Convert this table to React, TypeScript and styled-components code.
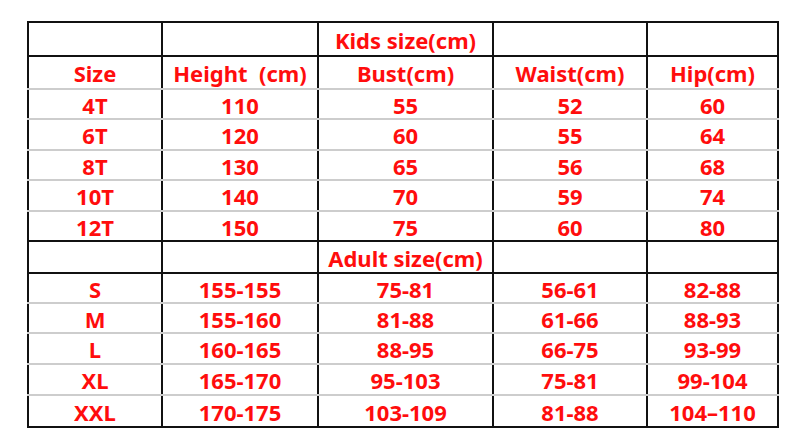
import React from "react";
import styled, { createGlobalStyle } from "styled-components";

const GlobalStyle = createGlobalStyle`
  html, body {
    margin: 0;
    padding: 0;
    background: #ffffff;
  }
`;

const Page = styled.div`
  width: 799px;
  height: 447px;
  padding: 21px 0 0 27px;
  box-sizing: border-box;
  background: #ffffff;
`;

const Table = styled.table`
  border-collapse: collapse;
  table-layout: fixed;
  width: 750px;
  border: 2px solid #111111;
  font-family: "Noto Sans", "Open Sans", "Noto Sans CJK SC", sans-serif;
  font-weight: 700;
  font-size: 22px;
  color: #ff0d0d;
`;

const Row = styled.tr<{ $h: number }>`
  height: ${({ $h }) => $h}px;
`;

const Cell = styled.td<{ $line: "black" | "gray" }>`
  padding: 1px 0 0;
  text-align: center;
  vertical-align: middle;
  line-height: 1;
  white-space: pre;
  border-left: 2px solid #111111;
  border-right: 2px solid #111111;
  border-bottom: 2px solid
    ${({ $line }) => ($line === "black" ? "#111111" : "#cdcdcd")};
`;

type Line = "black" | "gray";

const widths = [134, 156, 175, 154, 131];

const kids = [
  ["4T", "110", "55", "52", "60"],
  ["6T", "120", "60", "55", "64"],
  ["8T", "130", "65", "56", "68"],
  ["10T", "140", "70", "59", "74"],
  ["12T", "150", "75", "60", "80"],
];

const adults = [
  ["S", "155-155", "75-81", "56-61", "82-88"],
  ["M", "155-160", "81-88", "61-66", "88-93"],
  ["L", "160-165", "88-95", "66-75", "93-99"],
  ["XL", "165-170", "95-103", "75-81", "99-104"],
  ["XXL", "170-175", "103-109", "81-88", "104\u2013110"],
];

const kidHeights = [30, 31, 30, 31, 30];
const adultHeights = [30, 30, 31, 31, 32];

const DataRow = ({ cells, h, line }: { cells: string[]; h: number; line: Line }) => (
  <Row $h={h}>
    {cells.map((c, i) => (
      <Cell key={i} $line={line}>
        {c}
      </Cell>
    ))}
  </Row>
);

const SectionRow = ({ title, h }: { title: string; h: number }) => (
  <DataRow cells={["", "", title, "", ""]} h={h} line="black" />
);

export default function App() {
  return (
    <Page>
      <GlobalStyle />
      <Table>
        <colgroup>
          {widths.map((w, i) => (
            <col key={i} style={{ width: w }} />
          ))}
        </colgroup>
        <tbody>
          <SectionRow title="Kids size(cm)" h={34} />
          <DataRow
            cells={["Size", "Height\u00a0\u00a0(cm)", "Bust(cm)", "Waist(cm)", "Hip(cm)"]}
            h={33}
            line="gray"
          />
          {kids.map((r, i) => (
            <DataRow
              key={r[0]}
              cells={r}
              h={kidHeights[i]}
              line={i === kids.length - 1 ? "black" : "gray"}
            />
          ))}
          <SectionRow title="Adult size(cm)" h={32} />
          {adults.map((r, i) => (
            <DataRow
              key={r[0]}
              cells={r}
              h={adultHeights[i]}
              line={i === adults.length - 1 ? "black" : "gray"}
            />
          ))}
        </tbody>
      </Table>
    </Page>
  );
}
